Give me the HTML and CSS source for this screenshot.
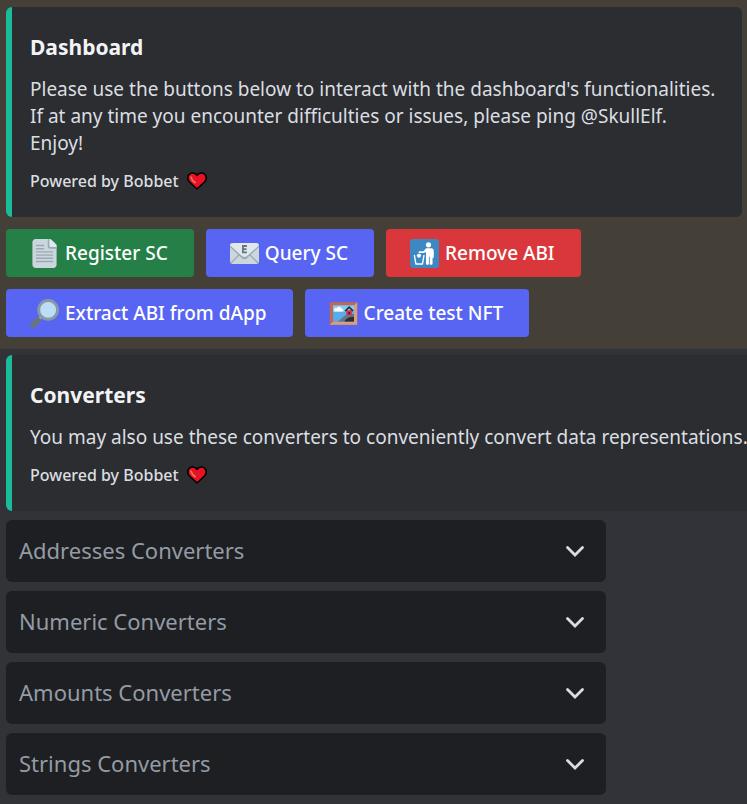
FILE: index.html
```html
<!DOCTYPE html>
<html lang="en">
<head>
    <meta charset="UTF-8">
    <meta name="viewport" content="width=device-width, initial-scale=1.0">
    <title>Dashboard</title>
    <link rel="stylesheet" href="styles.css">
</head>
<body>
    <!-- heart and arrow shapes shared by several elements -->
    <svg class="shapes" aria-hidden="true">
        <symbol id="heart" viewBox="0 0 20 18">
            <path d="M10 17 2 9.500C-1 5 2 1 5.500 1 8 1 9.500 2.500 10 3.500 10.500 2.500 12 1 14.500 1 18 1 21 5 18 9.500Z" fill="#e81224" stroke="#000" stroke-width="1.600" stroke-linejoin="round"/>
            <path d="M4 5.200c.5 2 1.600 3.600 4 5.300" fill="none" stroke="#f5735f" stroke-width="1.700" stroke-linecap="round"/>
        </symbol>
        <symbol id="arrow" viewBox="0 0 24 24">
            <path d="M4.500 8.500 12 16l7.500-7.500" fill="none" stroke="#dbdee1" stroke-width="2.800" stroke-linecap="round"/>
        </symbol>
    </svg>

    <section class="message highlighted">
        <div class="embed">
            <h2>Dashboard</h2>
            <p>Please use the buttons below to interact with the dashboard's functionalities.<br>If at any time you encounter difficulties or issues, please ping @SkullElf.<br>Enjoy!</p>
            <footer>Powered by Bobbet <svg class="heart" role="img" aria-label="heart"><use href="#heart"/></svg></footer>
        </div>
        <div class="buttons">
            <button type="button" class="btn green">
                <svg class="emoji" viewBox="0 0 36 36" aria-hidden="true">
                    <path d="M7 0h17l9 9v23c0 2.200-1.800 4-4 4H7c-2.200 0-4-1.800-4-4V4c0-2.200 1.800-4 4-4z" fill="#ccd6dd"/>
                    <path d="M22 0h2l9 9v3h-8c-1.700 0-3-1.300-3-3z" fill="#99aab5"/>
                    <path d="M24 0h1c1 0 7 6 8 7v3h-7c-1.100 0-2-.9-2-2z" fill="#e1e8ed"/>
                    <path d="M8 8h9M8 12h9M8 16h20M8 20h20M8 24h20M8 28h20" stroke="#99aab5" stroke-width="1.800" stroke-linecap="round"/>
                </svg>
                Register SC
            </button>
            <button type="button" class="btn blue">
                <svg class="emoji" viewBox="0 0 36 36" aria-hidden="true">
                    <rect y="5" width="36" height="26" rx="3" fill="#ccd6dd"/>
                    <path d="M13 18 1.200 29.800M23 18l11.800 11.800" stroke="#99aab5" stroke-width="1.600"/>
                    <path d="M32 5H4C1.800 5 0 6.800 0 9v1l14.500 13.500c2 2 5 2 7 0L36 10V9c0-2.200-1.800-4-4-4z" fill="#99aab5"/>
                    <path d="M32 5H4C2 5 .5 6.500.2 8.200l14.700 13c1.800 1.700 4.400 1.700 6.200 0l14.700-13C35.500 6.500 34 5 32 5z" fill="#e1e8ed"/>
                    <path d="M21 8.700h-5v8h5M16 12.700h4.500" fill="none" stroke="#66757f" stroke-width="2.200"/>
                </svg>
                Query SC
            </button>
            <button type="button" class="btn red">
                <svg class="emoji" viewBox="0 0 36 36" aria-hidden="true">
                    <rect width="36" height="36" rx="4" fill="#3b88c3"/>
                    <circle cx="23" cy="7.200" r="3.200" fill="#fff"/>
                    <path d="M20 11.500h6.500c1.800 0 3 1.400 3 3.200V22c0 1-.6 1.500-1.500 1.500V31c0 1.200-3.500 1.500-3.500 0v-9h-1v9c0 1.500-3.700 1.200-3.700 0V16.200l-2.600 1.300h-5.500c-1.400 0-1.400-2.300 0-2.300h5z" fill="#fff"/>
                    <path d="M5.500 20.500 7.300 31h8.200l1.800-10.500" fill="none" stroke="#fff" stroke-width="1.700" stroke-linejoin="round" stroke-linecap="round"/>
                    <path d="m11.300 18 2.700 2-1.200 3H9.500l-1.300-3z" fill="#fff"/>
                </svg>
                Remove ABI
            </button>
            <button type="button" class="btn blue">
                <svg class="emoji" viewBox="0 0 36 36" aria-hidden="true">
                    <path d="m10 26 5-5" stroke="#9aaab4" stroke-width="3.500"/>
                    <path d="m4 32 5.500-5.500" stroke="#66757f" stroke-width="7.500" stroke-linecap="round"/>
                    <circle cx="22.500" cy="13.500" r="11.700" fill="#bbddf5" stroke="#8899a6" stroke-width="3.600"/>
                </svg>
                Extract ABI from dApp
            </button>
            <button type="button" class="btn blue">
                <svg class="emoji" viewBox="0 0 36 36" aria-hidden="true">
                    <rect x="1" y="4" width="34" height="28" rx="1" fill="#c1694f"/>
                    <path d="m35 4-4 4v20H5l-4 4h34z" fill="#d99e82"/>
                    <path d="M5 8h26v20H5z" fill="#55acee"/>
                    <path d="M5 8h26v8H5z" fill="#88c9f9"/>
                    <path d="M7 15.500c-2-2 0-5 2.500-4 1-3 6-2.500 6 .5 3 0 3 3.500.5 3.500z" fill="#fff"/>
                    <path d="M11 28c4-3 7-6 10-8 4-1 7-2 10-1v9z" fill="#66757f"/>
                    <path d="M19 28c2-4 6-6 12-6v6z" fill="#292f33"/>
                    <path d="M21.500 14h7v6h-7z" fill="#dd2e44"/>
                    <path d="m20 15 5-5 5 5" fill="none" stroke="#292f33" stroke-width="2"/>
                    <path d="M24 16h2v3h-2z" fill="#292f33"/>
                </svg>
                Create test NFT
            </button>
        </div>
    </section>

    <section class="message">
        <div class="embed wide">
            <h2>Converters</h2>
            <p>You may also use these converters to conveniently convert data representations.</p>
            <footer>Powered by Bobbet <svg class="heart" role="img" aria-label="heart"><use href="#heart"/></svg></footer>
        </div>
        <div class="menus">
            <div class="menu">
                <select aria-label="Addresses Converters"><option>Addresses Converters</option></select>
                <svg class="arrow" aria-hidden="true"><use href="#arrow"/></svg>
            </div>
            <div class="menu">
                <select aria-label="Numeric Converters"><option>Numeric Converters</option></select>
                <svg class="arrow" aria-hidden="true"><use href="#arrow"/></svg>
            </div>
            <div class="menu">
                <select aria-label="Amounts Converters"><option>Amounts Converters</option></select>
                <svg class="arrow" aria-hidden="true"><use href="#arrow"/></svg>
            </div>
            <div class="menu">
                <select aria-label="Strings Converters"><option>Strings Converters</option></select>
                <svg class="arrow" aria-hidden="true"><use href="#arrow"/></svg>
            </div>
        </div>
    </section>
</body>
</html>
```
FILE: styles.css
```css
* {
    margin: 0;
    padding: 0;
    box-sizing: border-box;
}

body {
    font-family: "Noto Sans", "Open Sans", sans-serif;
    font-size: 19px;
    line-height: 27px;
    background-color: #313338;
    color: #dbdee1;
    overflow-x: hidden;
}

.shapes {
    display: none;
}

/* messages */
.message {
    padding: 6px 5px 9px 6px;
}

.highlighted {
    background-color: #444037;
    padding: 7px 5px 12px 6px;
}

.embed {
    background-color: #2b2d31;
    border-left: 6px solid #1abc9c;
    border-radius: 6px;
    padding: 24px 18px;
}

.embed.wide {
    margin-right: -5px;
    padding-right: 0;
    border-radius: 6px 0 0 6px;
    white-space: nowrap;
}

.embed h2 {
    font-size: 21px;
    line-height: 32px;
    font-weight: 700;
    color: #f2f3f5;
    margin-bottom: 13px;
}

.embed footer {
    display: flex;
    align-items: center;
    gap: 8px;
    font-size: 16px;
    line-height: 24px;
    font-weight: 500;
    margin-top: 12px;
}

.heart {
    width: 20px;
    height: 18px;
}

/* buttons */
.buttons {
    display: flex;
    flex-wrap: wrap;
    gap: 12px;
    margin-top: 12px;
    padding-right: 96px;
}

.btn {
    display: flex;
    align-items: center;
    gap: 6px;
    height: 48px;
    padding: 0 26px 0 24px;
    border: none;
    border-radius: 4px;
    color: #fff;
    font: inherit;
    font-weight: 500;
    cursor: pointer;
}

.green {
    background-color: #248046;
}

.blue {
    background-color: #5865f2;
}

.red {
    background-color: #da373c;
}

.emoji {
    width: 29px;
    height: 29px;
}

/* drop-downs */
.menus {
    display: grid;
    gap: 9px;
    max-width: 600px;
    margin-top: 9px;
}

.menu {
    display: grid;
    align-items: center;
}

.menu select,
.arrow {
    grid-area: 1 / 1;
}

.menu select {
    appearance: none;
    width: 100%;
    height: 62px;
    padding: 0 60px 2px 13px;
    border: none;
    border-radius: 6px;
    background-color: #1e1f22;
    color: #949ba4;
    font: inherit;
    font-size: 22px;
}

.arrow {
    justify-self: end;
    width: 24px;
    height: 24px;
    margin-right: 19px;
    pointer-events: none;
}
```
